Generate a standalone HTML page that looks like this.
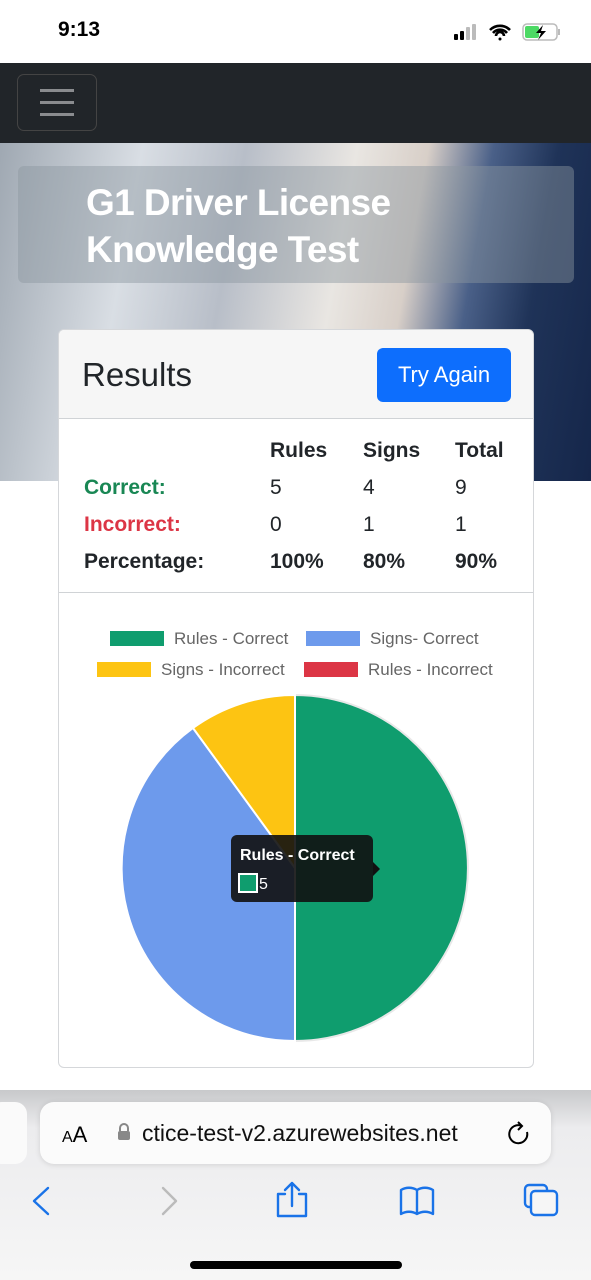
<!DOCTYPE html>
<html><head><meta charset="utf-8"><style>
*{margin:0;padding:0;box-sizing:border-box}
body{width:591px;height:1280px;position:relative;overflow:hidden;background:#fff;font-family:"Liberation Sans",sans-serif;color:#212529}
.abs{position:absolute}
</style></head><body>
<div class="abs" style="left:58px;top:18px;font-size:21px;font-weight:bold;color:#000">9:13</div>
<svg class="abs" style="left:452px;top:22px" width="110" height="22">
<rect x="2" y="12" width="4" height="6" rx="1" fill="#000"/><rect x="8" y="9" width="4" height="9" rx="1" fill="#000"/><rect x="14" y="5" width="4" height="13" rx="1" fill="#bbb"/><rect x="20" y="2" width="4" height="16" rx="1" fill="#bbb"/>
<path d="M38 8a14 14 0 0 1 20 0M41 11a9 9 0 0 1 14 0M44 14a4 4 0 0 1 8 0" stroke="#000" stroke-width="2.6" fill="none"/><circle cx="48" cy="17" r="1.5"/>
<rect x="71" y="2" width="34" height="16" rx="4" fill="none" stroke="#bbb" stroke-width="1.5"/><rect x="73" y="4" width="14" height="12" rx="2" fill="#4cd964"/><path d="M91 3l-7 8h5l-3 7 8-9h-5z" fill="#000"/><rect x="106" y="7" width="2" height="6" fill="#bbb"/>
</svg>
<div class="abs" style="left:0;top:63px;width:591px;height:80px;background:#212529"></div>
<div class="abs" style="left:17px;top:74px;width:80px;height:57px;border:1px solid #444;border-radius:7px"></div>
<div class="abs" style="left:40px;top:89px;width:34px;height:3px;background:#8a8c8f;box-shadow:0 12px 0 #8a8c8f,0 24px 0 #8a8c8f"></div>
<div class="abs" style="left:0;top:143px;width:591px;height:338px;background:linear-gradient(100deg,#9fa8b2 0%,#d9dee4 22%,#b8bec8 38%,#e9e6e2 55%,#d8cfc8 66%,#4a6088 76%,#1f3358 86%,#15264a 100%)"></div>
<div class="abs" style="left:18px;top:166px;width:556px;height:117px;background:rgba(140,150,160,.45);border-radius:6px"></div>
<div class="abs" style="left:86px;top:179px;font-size:37px;font-weight:bold;color:#fff;line-height:47px;letter-spacing:-.6px">G1 Driver License<br>Knowledge Test</div>
<div class="abs" style="left:58px;top:329px;width:476px;height:739px;border:1px solid #d5d7da;border-radius:6px;background:#fff;overflow:hidden">
 <div style="height:89px;background:rgba(245,245,245,.93);border-bottom:1px solid #d0d3d6;position:relative">
  <div class="abs" style="left:23px;top:26px;font-size:33px">Results</div>
  <div class="abs" style="left:318px;top:18px;width:134px;height:54px;background:#0d6efd;border-radius:6px;color:#fff;font-size:22px;text-align:center;line-height:54px">Try Again</div>
 </div>
 <div style="height:174px;border-bottom:1px solid #d0d3d6;position:relative;font-size:21px;background:rgba(255,255,255,.9)">
  <div class="abs" style="top:20px;left:211px;font-weight:bold">Rules</div><div class="abs" style="top:20px;left:304px;font-weight:bold">Signs</div><div class="abs" style="top:20px;left:396px;font-weight:bold">Total</div>
  <div class="abs" style="top:57px;left:25px;font-weight:bold;color:#198754">Correct:</div><div class="abs" style="top:57px;left:211px">5</div><div class="abs" style="top:57px;left:304px">4</div><div class="abs" style="top:57px;left:396px">9</div>
  <div class="abs" style="top:94px;left:25px;font-weight:bold;color:#dc3545">Incorrect:</div><div class="abs" style="top:94px;left:211px">0</div><div class="abs" style="top:94px;left:304px">1</div><div class="abs" style="top:94px;left:396px">1</div>
  <div class="abs" style="top:131px;left:25px;font-weight:bold">Percentage:</div><div class="abs" style="top:131px;left:211px;font-weight:bold">100%</div><div class="abs" style="top:131px;left:304px;font-weight:bold">80%</div><div class="abs" style="top:131px;left:396px;font-weight:bold">90%</div>
 </div>
</div>
<svg class="abs" style="left:0;top:600px" width="591" height="470">
<g font-family="Liberation Sans" font-size="17" fill="#666">
<rect x="110" y="31" width="54" height="15" fill="#0f9d6e"/><text x="174" y="44">Rules - Correct</text>
<rect x="306" y="31" width="54" height="15" fill="#6d9aec"/><text x="370" y="44">Signs- Correct</text>
<rect x="97" y="62" width="54" height="15" fill="#fdc412"/><text x="161" y="75">Signs - Incorrect</text>
<rect x="304" y="62" width="54" height="15" fill="#dc3545"/><text x="368" y="75">Rules - Incorrect</text>
</g>
<path d="M295 268V95A173 173 0 0 1 295 441Z" fill="#0f9d6e" stroke="#e8e8e8" stroke-width="2"/>
<path d="M295 268V441A173 173 0 0 1 193 128Z" fill="#6d9aec" stroke="#fff" stroke-width="2"/>
<path d="M295 268L193 128A173 173 0 0 1 295 95Z" fill="#fdc412" stroke="#fff" stroke-width="2"/>
<rect x="231" y="235" width="142" height="67" rx="6" fill="#111" opacity=".9"/><path d="M373 262l7 7-7 7z" fill="#111"/>
<text x="240" y="260" font-family="Liberation Sans" font-size="16" font-weight="bold" fill="#fff">Rules - Correct</text>
<rect x="239" y="274" width="18" height="18" fill="#0f9d6e" stroke="#fff" stroke-width="2"/>
<text x="259" y="289" font-family="Liberation Sans" font-size="16" fill="#fff">5</text>
</svg>
<div class="abs" style="left:0;top:1090px;width:591px;height:190px;background:linear-gradient(#c8c9cb,#ececee 20%,#f6f6f6)"></div>
<div class="abs" style="left:-10px;top:1102px;width:37px;height:62px;background:#fafafa;border-radius:12px"></div>
<div class="abs" style="left:40px;top:1102px;width:511px;height:62px;background:#fbfbfb;border-radius:14px;box-shadow:0 1px 6px rgba(0,0,0,.12)"></div>
<div class="abs" style="left:62px;top:1122px;font-size:22px;color:#000"><span style="font-size:16px">A</span>A</div>
<svg class="abs" style="left:117px;top:1123px" width="14" height="18"><path d="M3 8V5a4 4 0 0 1 8 0v3" stroke="#888" stroke-width="2" fill="none"/><rect x="1" y="8" width="12" height="9" rx="2" fill="#888"/></svg>
<div class="abs" style="left:142px;top:1120px;font-size:23px;color:#111">ctice-test-v2.azurewebsites.net</div>
<svg class="abs" style="left:506px;top:1120px" width="26" height="28"><path d="M16 6A9 9 0 1 0 21 12" stroke="#000" stroke-width="2" fill="none"/><path d="M12 2l4 4-4 4" stroke="#000" stroke-width="2" fill="none"/></svg>
<svg class="abs" style="left:0;top:1180px" width="591" height="50" fill="none" stroke-width="2.4" stroke-linecap="round" stroke-linejoin="round">
<path d="M48 8L34 21 48 34" stroke="#1a73e8"/>
<path d="M163 8L176 21 163 34" stroke="#bbb"/>
<g stroke="#1a73e8"><path d="M285 14h-7v22h28V14h-7M292 26V3M285 10l7-7 7 7"/>
<path d="M401 10c5-3 11-3 16 0v24c-5-3-11-3-16 0zM417 10c5-3 11-3 16 0v24c-5-3-11-3-16 0z"/>
<rect x="525" y="5" width="22" height="22" rx="4"/><rect x="531" y="11" width="26" height="24" rx="4" fill="#f6f6f6"/></g>
</svg>
<div class="abs" style="left:190px;top:1261px;width:212px;height:8px;background:#000;border-radius:4px"></div>
</body></html>
